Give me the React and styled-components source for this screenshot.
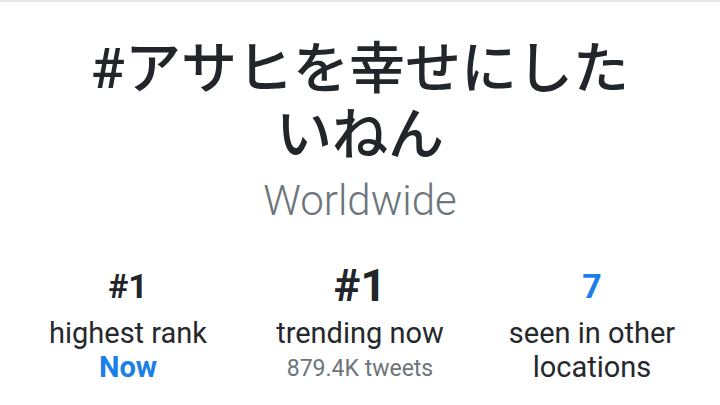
import React from "react";
import styled, { createGlobalStyle } from "styled-components";

const Global = createGlobalStyle`
  html, body { margin: 0; padding: 0; background: #ffffff; }
  body { font-family: Roboto, "Noto Sans CJK JP", sans-serif; }
`;

const Page = styled.div`
  width: 720px;
  height: 405px;
  overflow: hidden;
  border-top: 2px solid #e3e5e8;
  box-sizing: border-box;
  display: flex;
  flex-direction: column;
  align-items: center;
  padding-top: 34px;
`;

const Title = styled.h1`
  margin: 0;
  width: 580px;
  text-align: center;
  font-family: Roboto, "Noto Sans CJK JP", sans-serif;
  font-size: 56px;
  line-height: 66px;
  font-weight: 500;
  color: #222529;
`;

const Region = styled.div`
  margin-top: 8px;
  font-family: Roboto, sans-serif;
  font-weight: 300;
  font-size: 42px;
  line-height: 50px;
  color: #6d757c;
`;

const Stats = styled.div`
  margin-top: 38px;
  width: 100%;
  box-sizing: border-box;
  padding: 0 12px;
  display: grid;
  grid-template-columns: repeat(3, 1fr);
`;

const Stat = styled.div`
  display: flex;
  flex-direction: column;
  align-items: center;
  text-align: center;
  font-family: Roboto, sans-serif;
`;

const Value = styled.div`
  font-weight: 700;
  font-size: ${(p) => (p.$big ? "45px" : "34px")};
  line-height: 44px;
  color: ${(p) => (p.$accent ? "#1a7fe8" : "#222529")};
  margin-bottom: 8px;
`;

const Label = styled.div`
  font-size: 29px;
  line-height: 34px;
  color: #25282c;
`;

const Emph = styled.div`
  font-size: 29px;
  line-height: 34px;
  font-weight: 700;
  color: #1a7fe8;
`;

const Sub = styled.div`
  font-size: 23px;
  line-height: 34px;
  margin-top: 2px;
  color: #6d757c;
`;

export default function App() {
  return (
    <>
      <Global />
      <Page>
        <Title>#アサヒを幸せにしたいねん</Title>
        <Region>Worldwide</Region>
        <Stats>
          <Stat>
            <Value>#1</Value>
            <Label>highest rank</Label>
            <Emph>Now</Emph>
          </Stat>
          <Stat>
            <Value $big>#1</Value>
            <Label>trending now</Label>
            <Sub>879.4K tweets</Sub>
          </Stat>
          <Stat>
            <Value $accent>7</Value>
            <Label>seen in other locations</Label>
          </Stat>
        </Stats>
      </Page>
    </>
  );
}
